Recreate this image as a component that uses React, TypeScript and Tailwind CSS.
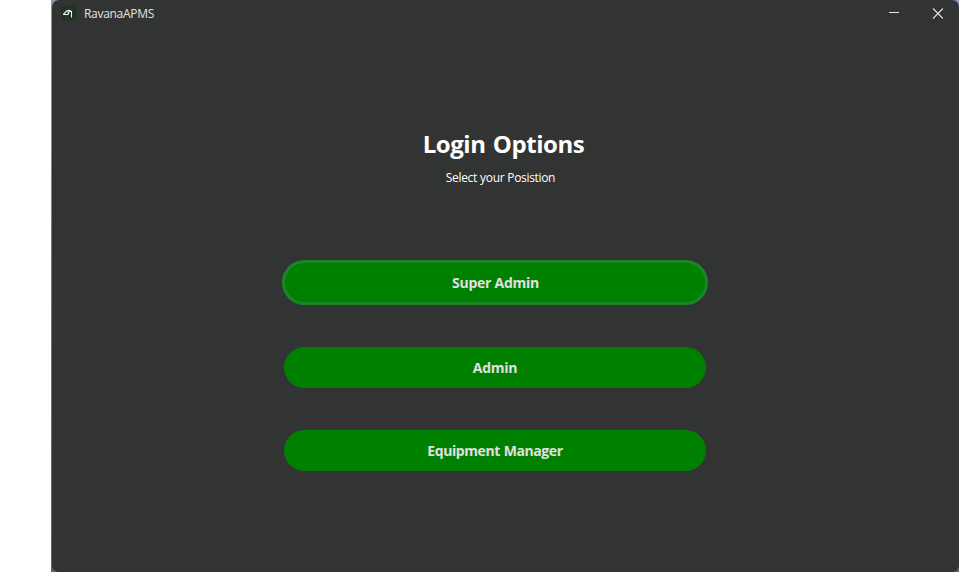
const font = "font-['Open_Sans','Noto_Sans',sans-serif]";

function AppIcon() {
  return (
    <svg width="15" height="15" viewBox="0 0 15 15" fill="none">
      <rect width="15" height="15" rx="3" fill="#1f3324" />
      <path
        d="M2 8.5H7.2L7.6 6.5M2.6 8L6 4.8L8 4.2M6.5 6.5L9 5.5H10.5V11.5M7.5 4L10.5 5.5"
        stroke="#f2f2f2"
        strokeWidth="1.1"
      />
    </svg>
  );
}

function TitleBar() {
  return (
    <header className="flex h-[27px] items-center pl-[9px] pr-4 text-[#e2e3e3]">
      <AppIcon />
      <span className="ml-2 grow text-xs leading-4 tracking-[-0.3px]">RavanaAPMS</span>
      <svg width="54" height="11" viewBox="0 0 54 11" fill="none" stroke="#e6e6e6">
        <path d="M0 4.5H10" />
        <path d="M44 0.5L54 10.5M54 0.5L44 10.5" strokeWidth="1.1" />
      </svg>
    </header>
  );
}

export default function App() {
  return (
    <div className={`flex h-[572px] w-[959px] overflow-hidden bg-white pl-[51px] ${font}`}>
      <div className="w-[908px] bg-gradient-to-b from-[#8796b8] via-[#73777c] to-[#79574f]">
        <div className="ml-px h-[572px] overflow-hidden rounded-[7px] bg-[#323433]">
          <TitleBar />
          <main className="flex flex-col items-center pr-[22px] pt-[101px]">
            <h1 className="ml-[18px] h-8 whitespace-nowrap text-2xl font-bold leading-8 tracking-[-0.44px] text-white [word-spacing:1.4px]">
              Login Options
            </h1>
            <p className="ml-[12px] mt-[10px] h-4 whitespace-nowrap text-xs leading-4 tracking-[-0.33px] text-white [word-spacing:0.3px]">
              Select your Posistion
            </p>
            <button className="mt-[74px] h-[45px] w-[426px] rounded-full border-3 border-[#1c8528] bg-[#008000] pl-[2px] text-sm font-bold tracking-[-0.25px] text-[#e0e0e0]">
              Super Admin
            </button>
            <button className="mt-[42px] h-[41px] w-[422px] rounded-full bg-[#008000] pl-px text-sm font-bold tracking-[-0.25px] text-[#e0e0e0]">
              Admin
            </button>
            <button className="mt-[42px] h-[41px] w-[422px] rounded-full bg-[#008000] pl-px text-sm font-bold tracking-[-0.42px] text-[#e0e0e0] [word-spacing:0.6px]">
              Equipment Manager
            </button>
          </main>
        </div>
      </div>
    </div>
  );
}
